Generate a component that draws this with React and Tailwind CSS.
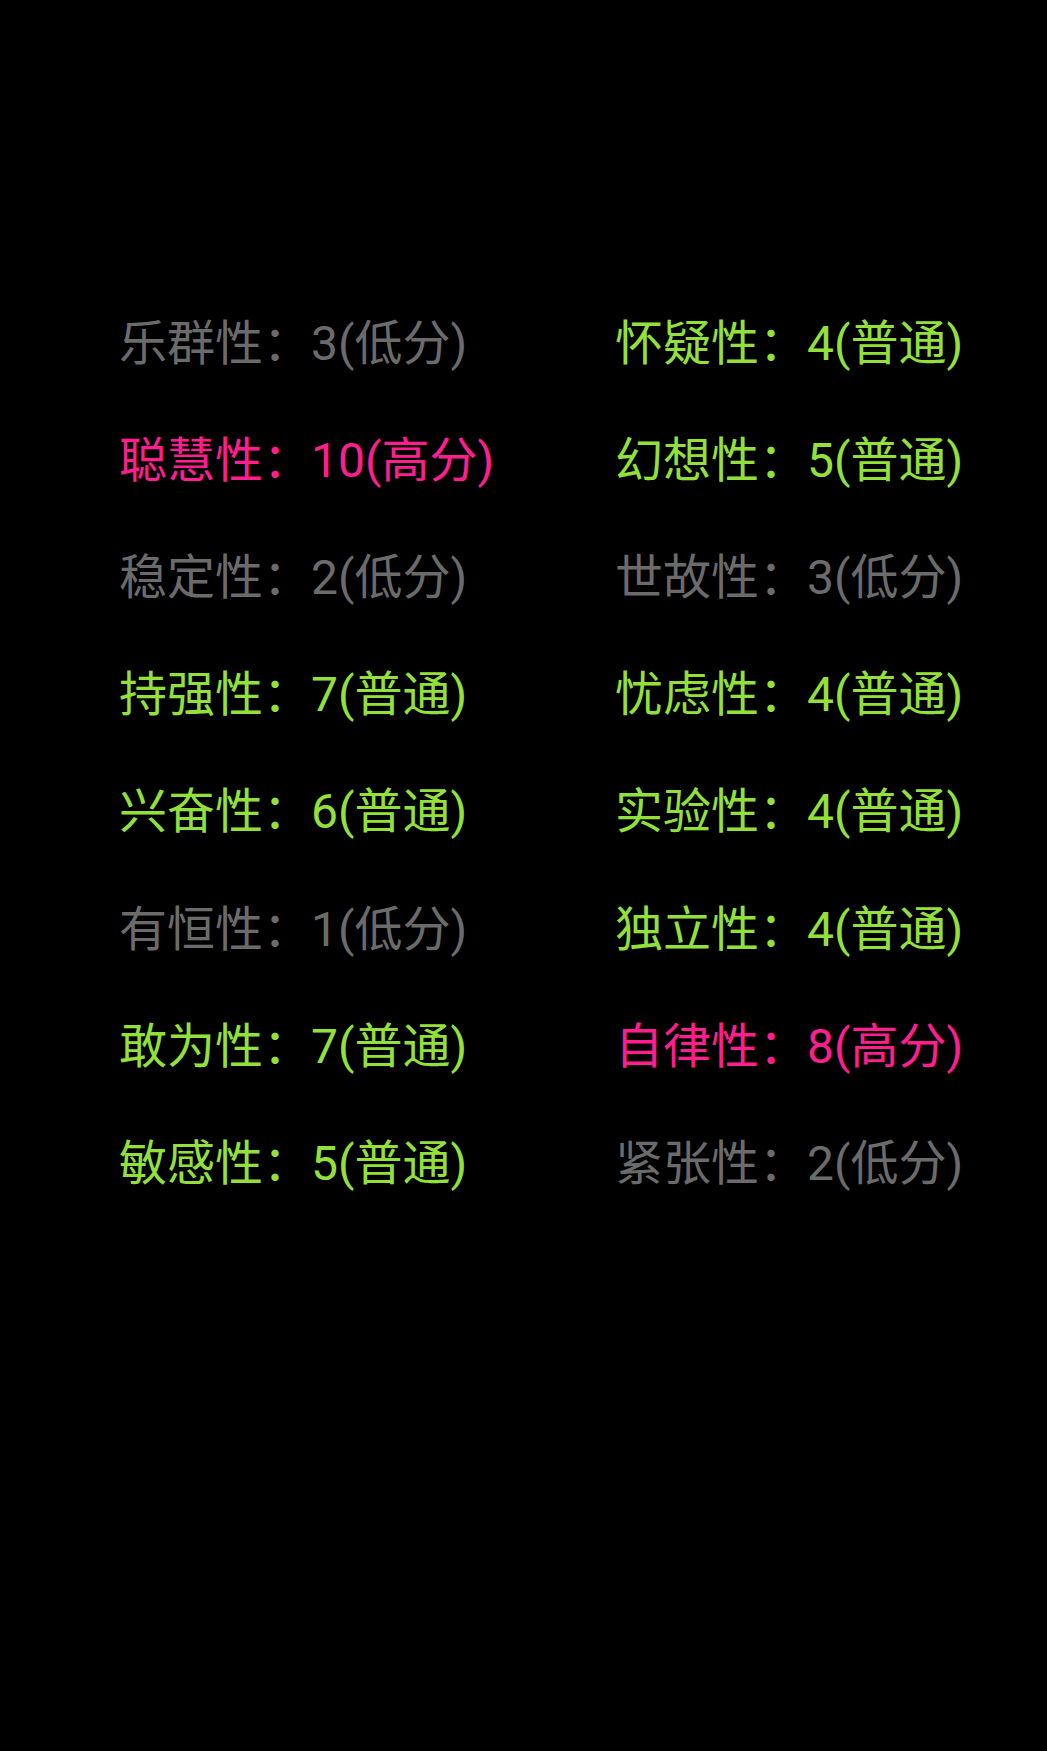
const GREY = "text-[#6b6b6b]";
const GREEN = "text-[#94e03a]";
const PINK = "text-[#ff1e8e]";

const rows = [
  [["乐群性", 3, "低分"], ["怀疑性", 4, "普通"]],
  [["聪慧性", 10, "高分"], ["幻想性", 5, "普通"]],
  [["稳定性", 2, "低分"], ["世故性", 3, "低分"]],
  [["持强性", 7, "普通"], ["忧虑性", 4, "普通"]],
  [["兴奋性", 6, "普通"], ["实验性", 4, "普通"]],
  [["有恒性", 1, "低分"], ["独立性", 4, "普通"]],
  [["敢为性", 7, "普通"], ["自律性", 8, "高分"]],
  [["敏感性", 5, "普通"], ["紧张性", 2, "低分"]],
];

function colorFor(level) {
  if (level === "高分") return PINK;
  if (level === "低分") return GREY;
  return GREEN;
}

function Trait({ item }) {
  const [name, score, level] = item;
  return (
    <div className={`flex items-center h-[117.2px] leading-none whitespace-nowrap ${colorFor(level)}`}>
      {name}：{score}({level})
    </div>
  );
}

export default function App() {
  return (
    <div
      className="bg-black min-h-[1751px] w-full pt-[285px] pl-[119px] text-[48px]"
      style={{ fontFamily: 'Roboto, "Noto Sans CJK SC", sans-serif' }}
    >
      <div className="grid grid-cols-[496px_1fr]">
        {rows.map((pair, i) => (
          <div key={i} className="contents">
            <Trait item={pair[0]} />
            <Trait item={pair[1]} />
          </div>
        ))}
      </div>
    </div>
  );
}
